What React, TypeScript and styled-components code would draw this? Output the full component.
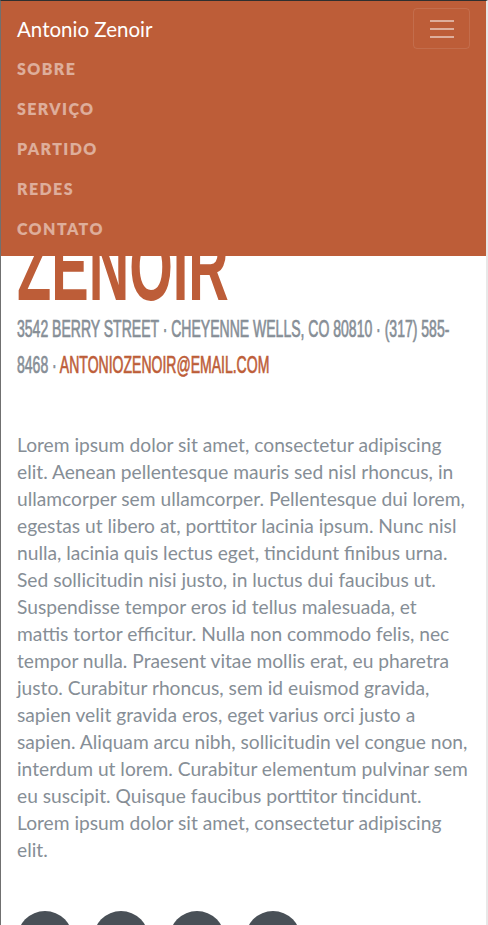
import React from 'react';
import styled, { createGlobalStyle } from 'styled-components';
import { FaFacebookF, FaGithub, FaLinkedinIn, FaTwitter } from 'react-icons/fa';

const GlobalStyle = createGlobalStyle`
  html, body {
    margin: 0;
    padding: 0;
    background: #ffffff;
  }
  body {
    font-family: Lato, 'Open Sans', sans-serif;
    overflow-x: hidden;
  }
  * {
    box-sizing: border-box;
  }
`;

// the narrow display face is approximated by squeezing Liberation Sans
const SQUEEZE = 0.584;

const Frame = styled.div`
  min-height: 100vh;
  border-top: 1px solid #2f2f2f;
  border-left: 1px solid #707070;
  border-right: 2px solid #e8e8e8;
`;

const Navbar = styled.nav`
  position: fixed;
  top: 0;
  left: 1px;
  right: 2px;
  z-index: 10;
  display: flex;
  flex-wrap: wrap;
  align-items: center;
  justify-content: space-between;
  padding: 7px 16px;
  border-top: 1px solid #2f2f2f;
  background: #bd5d38;
`;

const Brand = styled.a`
  padding: 5px 0;
  font-family: Lato, 'Open Sans', sans-serif;
  font-size: 20.5px;
  line-height: 30px;
  color: #ffffff;
  text-decoration: none;
`;

const Toggler = styled.button`
  display: flex;
  align-items: center;
  justify-content: center;
  width: 57px;
  height: 41px;
  padding: 0;
  background: transparent;
  border: 1px solid rgba(255, 255, 255, 0.1);
  border-radius: 4px;
`;

const NavList = styled.ul`
  flex-basis: 100%;
  margin: 0;
  padding: 0;
  list-style: none;
`;

const NavLink = styled.a`
  display: block;
  padding: 8px 0;
  font-family: Lato, 'Open Sans', sans-serif;
  font-size: 16px;
  font-weight: 800;
  line-height: 24px;
  letter-spacing: 1.4px;
  text-transform: uppercase;
  color: rgba(255, 255, 255, 0.5);
  text-decoration: none;
`;

const Main = styled.main`
  padding: 134px 16px 48px;
`;

const Heading = styled.h1`
  width: calc(100% / ${SQUEEZE});
  margin: 0;
  font-family: 'Liberation Sans', Arial, sans-serif;
  font-size: 96px;
  font-weight: 700;
  line-height: 88px;
  text-transform: uppercase;
  color: #343a40;
  transform: scaleX(${SQUEEZE});
  transform-origin: left top;
`;

const Accent = styled.span`
  color: #bd5d38;
`;

const Subheading = styled.div`
  width: calc(100% / ${SQUEEZE});
  margin-bottom: 48px;
  font-family: 'Liberation Sans', Arial, sans-serif;
  font-size: 24px;
  font-weight: 400;
  line-height: 36px;
  text-transform: uppercase;
  color: #868e96;
  -webkit-text-stroke: 0.7px currentColor;
  transform: scaleX(${SQUEEZE});
  transform-origin: left top;
`;

const Mail = styled.a`
  color: #bd5d38;
  text-decoration: none;
`;

const Lead = styled.p`
  margin: 0 0 48px;
  font-family: Lato, 'Open Sans', sans-serif;
  font-size: 19.2px;
  line-height: 27px;
  color: #868e96;
`;

const SocialList = styled.ul`
  display: flex;
  gap: 20px;
  margin: 0;
  padding: 0;
  list-style: none;
`;

const SocialLink = styled.a`
  display: flex;
  align-items: center;
  justify-content: center;
  width: 56px;
  height: 56px;
  border-radius: 50%;
  background: #495057;
  color: #ffffff;
  font-size: 24px;
`;

const links = ['Sobre', 'Serviço', 'Partido', 'Redes', 'Contato'];

const lorem =
  'Lorem ipsum dolor sit amet, consectetur adipiscing elit. Aenean pellentesque mauris sed nisl rhoncus, in ullamcorper sem ullamcorper. Pellentesque dui lorem, egestas ut libero at, porttitor lacinia ipsum. Nunc nisl nulla, lacinia quis lectus eget, tincidunt finibus urna. Sed sollicitudin nisi justo, in luctus dui faucibus ut. Suspendisse tempor eros id tellus malesuada, et mattis tortor efficitur. Nulla non commodo felis, nec tempor nulla. Praesent vitae mollis erat, eu pharetra justo. Curabitur rhoncus, sem id euismod gravida, sapien velit gravida eros, eget varius orci justo a sapien. Aliquam arcu nibh, sollicitudin vel congue non, interdum ut lorem. Curabitur elementum pulvinar sem eu suscipit. Quisque faucibus porttitor tincidunt. Lorem ipsum dolor sit amet, consectetur adipiscing elit.';

const socials = [FaLinkedinIn, FaGithub, FaTwitter, FaFacebookF];

const App: React.FC = () => (
  <Frame>
    <GlobalStyle />
    <Navbar>
      <Brand href="#page-top">Antonio Zenoir</Brand>
      <Toggler aria-label="Toggle navigation">
        <svg width="30" height="30" viewBox="0 0 30 30">
          <path
            d="M3 7h24M3 15h24M3 23h24"
            stroke="rgba(255,255,255,0.5)"
            strokeWidth="2"
          />
        </svg>
      </Toggler>
      <NavList>
        {links.map((l) => (
          <li key={l}>
            <NavLink href={`#${l.toLowerCase()}`}>{l}</NavLink>
          </li>
        ))}
      </NavList>
    </Navbar>
    <Main>
      <Heading>
        Antonio <Accent>Zenoir</Accent>
      </Heading>
      <Subheading>
        3542 Berry Street · Cheyenne Wells, CO 80810 · (317) 585-8468 ·{' '}
        <Mail href="mailto:antoniozenoir@email.com">antoniozenoir@email.com</Mail>
      </Subheading>
      <Lead>{lorem}</Lead>
      <SocialList>
        {socials.map((Icon, i) => (
          <li key={i}>
            <SocialLink href="#">
              <Icon />
            </SocialLink>
          </li>
        ))}
      </SocialList>
    </Main>
  </Frame>
);

export default App;
